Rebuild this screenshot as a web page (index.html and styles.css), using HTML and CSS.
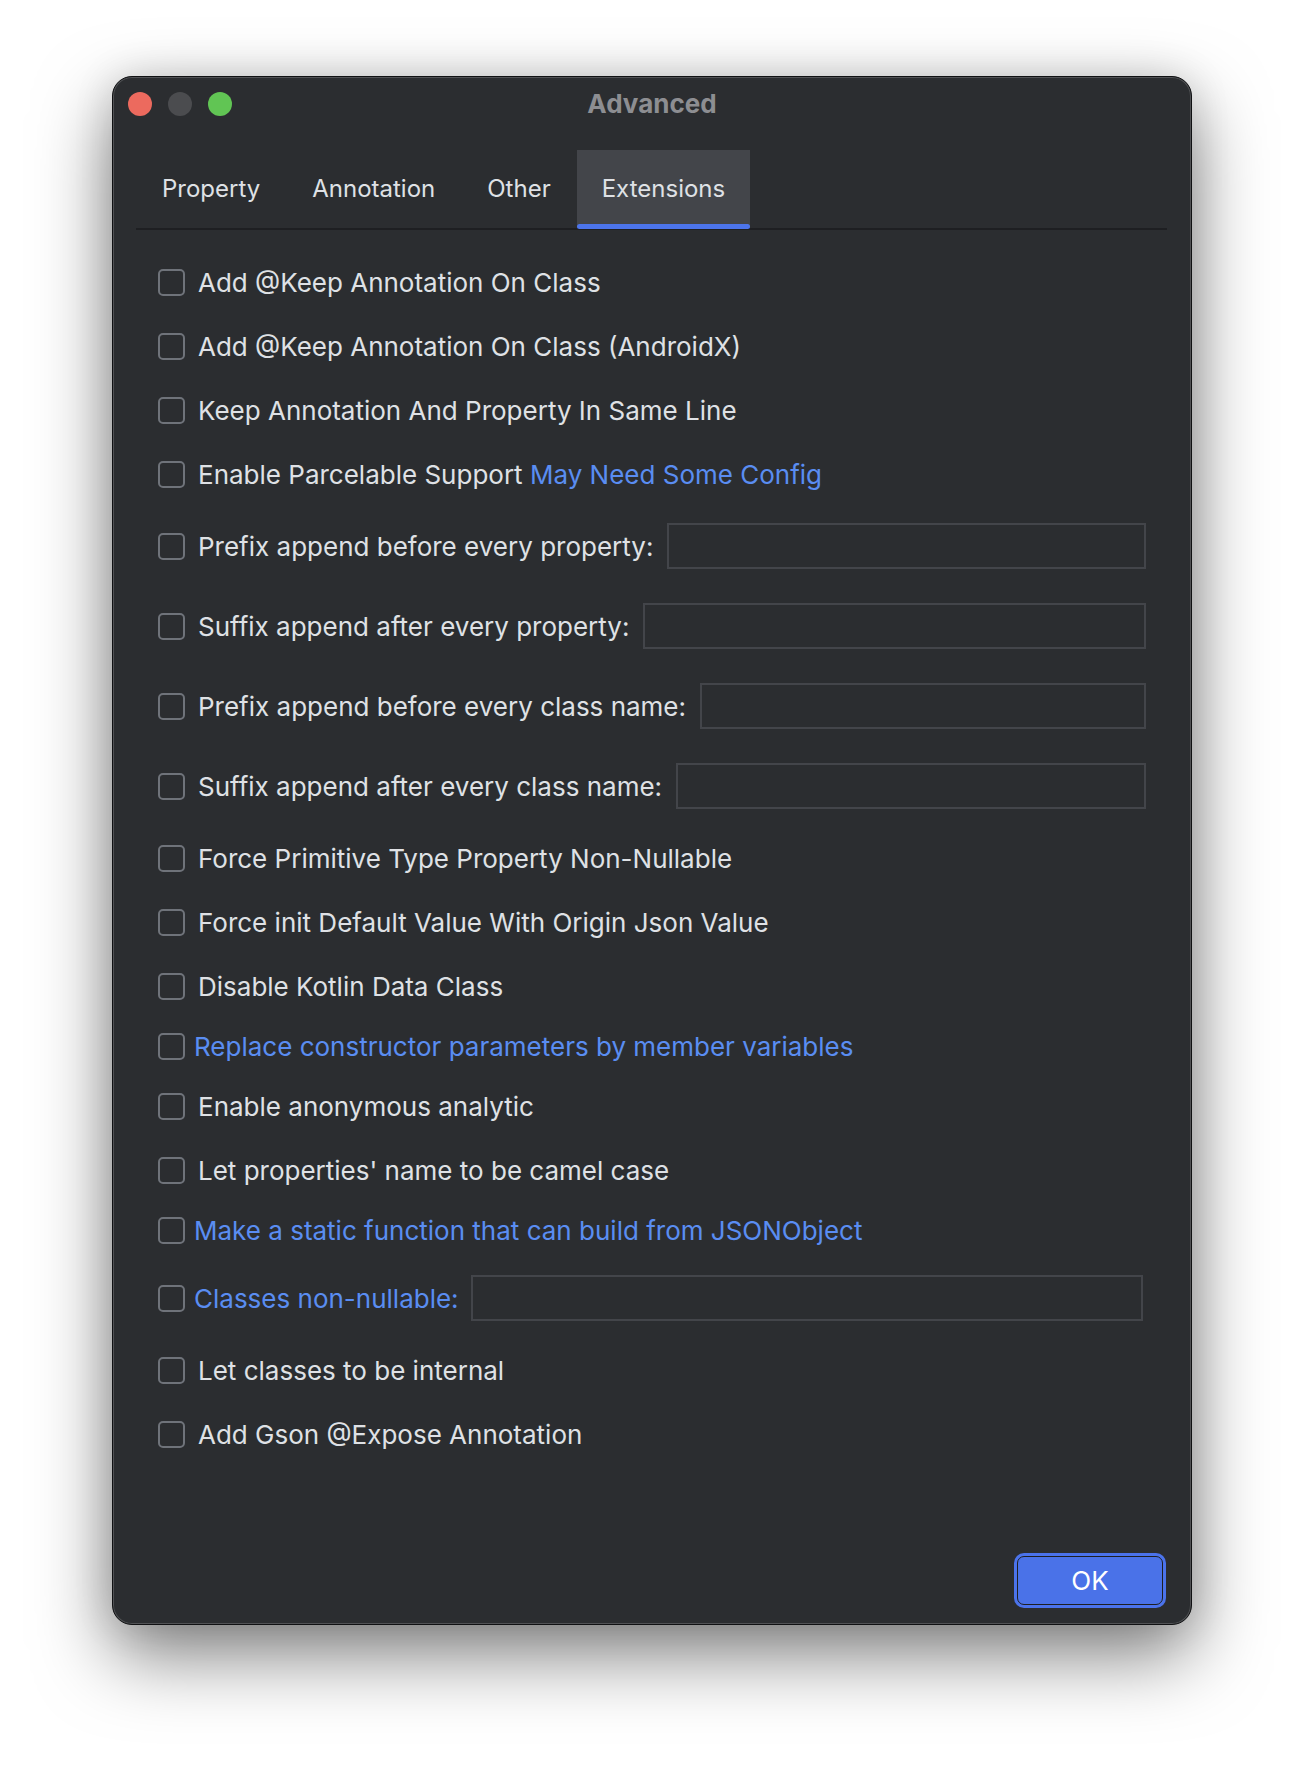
FILE: index.html
```html
<!DOCTYPE html>
<html lang="en">
<head>
<meta charset="utf-8">
<title>Advanced</title>
<link rel="stylesheet" href="styles.css">
</head>
<body>
<div class="window">
  <div class="titlebar">
    <div class="lights">
      <span class="light red"></span>
      <span class="light gray"></span>
      <span class="light green"></span>
    </div>
    <div class="title">Advanced</div>
    <div class="spacer"></div>
  </div>

  <div class="tabs">
    <div class="tab">Property</div>
    <div class="tab">Annotation</div>
    <div class="tab">Other</div>
    <div class="tab active">Extensions</div>
  </div>

  <div class="content">
    <div class="row"><span class="cb"></span><span class="label">Add @Keep Annotation On Class</span></div>
    <div class="row"><span class="cb"></span><span class="label">Add @Keep Annotation On Class (AndroidX)</span></div>
    <div class="row"><span class="cb"></span><span class="label">Keep Annotation And Property In Same Line</span></div>
    <div class="row"><span class="cb"></span><span class="label">Enable Parcelable Support <span class="link">May Need Some Config</span></span></div>
    <div class="row tall"><span class="cb"></span><span class="label">Prefix append before every property:</span><span class="field"></span></div>
    <div class="row tall"><span class="cb"></span><span class="label">Suffix append after every property:</span><span class="field"></span></div>
    <div class="row tall"><span class="cb"></span><span class="label">Prefix append before every class name:</span><span class="field"></span></div>
    <div class="row tall"><span class="cb"></span><span class="label">Suffix append after every class name:</span><span class="field"></span></div>
    <div class="row"><span class="cb"></span><span class="label">Force Primitive Type Property Non-Nullable</span></div>
    <div class="row"><span class="cb"></span><span class="label">Force init Default Value With Origin Json Value</span></div>
    <div class="row"><span class="cb"></span><span class="label">Disable Kotlin Data Class</span></div>
    <div class="row short"><span class="cb"></span><span class="label link">Replace constructor parameters by member variables</span></div>
    <div class="row"><span class="cb"></span><span class="label">Enable anonymous analytic</span></div>
    <div class="row"><span class="cb"></span><span class="label">Let properties' name to be camel case</span></div>
    <div class="row short"><span class="cb"></span><span class="label link">Make a static function that can build from JSONObject</span></div>
    <div class="row tall linkrow"><span class="cb"></span><span class="label link">Classes non-nullable:</span><span class="field narrow"></span></div>
    <div class="row"><span class="cb"></span><span class="label">Let classes to be internal</span></div>
    <div class="row"><span class="cb"></span><span class="label">Add Gson @Expose Annotation</span></div>
  </div>

  <div class="footer">
    <button class="ok" type="button">OK</button>
  </div>
</div>
</body>
</html>
```

FILE: styles.css
```css
* { box-sizing: border-box; }

html, body {
  margin: 0;
  padding: 0;
}

body {
  width: 1304px;
  height: 1774px;
  background: #ffffff;
  padding: 76px 112px 0 112px;
  font-family: "Inter", "Noto Sans", "Liberation Sans", sans-serif;
  color: #dfe1e5;
}

.window {
  width: 1080px;
  height: 1549px;
  background: #2b2d30;
  border: 1px solid #101113;
  border-radius: 20px;
  box-shadow:
    inset 0 0 0 1px rgba(255, 255, 255, 0.18),
    0 30px 75px rgba(0, 0, 0, 0.5),
    0 0 40px rgba(0, 0, 0, 0.12);
  display: flex;
  flex-direction: column;
}

.titlebar {
  height: 54px;
  display: grid;
  grid-template-columns: 1fr auto 1fr;
  align-items: center;
  padding: 0 15px;
}

.lights {
  display: flex;
  gap: 16px;
}

.light {
  width: 24px;
  height: 24px;
  border-radius: 50%;
  display: block;
}
.light.red { background: #ec6a5e; }
.light.gray { background: #4b4c4f; }
.light.green { background: #61c554; }

.title {
  font-weight: 700;
  font-size: 26px;
  color: #8d8e92;
  margin-top: -2px;
}

.tabs {
  margin: 19px 24px 0 23px;
  display: flex;
  border-bottom: 2px solid #1e1f22;
}

.tab {
  position: relative;
  height: 78px;
  padding: 0 26px 2px;
  display: flex;
  align-items: center;
  font-size: 24px;
  color: #dfe1e5;
}

.tab.active {
  background: #43454a;
  padding: 0 25px 2px;
}

.tab.active::after {
  content: "";
  position: absolute;
  left: 0;
  right: 0;
  bottom: -1px;
  height: 5px;
  border-radius: 3px;
  background: #4c74eb;
}

.content {
  padding: 20px 45px 0 45px;
  display: flex;
  flex-direction: column;
}

.row {
  height: 64px;
  display: flex;
  align-items: center;
  font-size: 26px;
}

.row.tall { height: 80px; }
.row.short { height: 56px; }

.cb {
  flex: none;
  width: 27px;
  height: 27px;
  border: 2px solid #6f737a;
  border-radius: 5px;
  margin-right: 13px;
}

.row.short .cb,
.row.linkrow .cb {
  margin-right: 9px;
}

.label {
  white-space: nowrap;
}

.link {
  color: #5a8df2;
}

.field {
  flex: 1;
  height: 46px;
  margin-left: 14px;
  border: 2px solid #43454a;
}

.field.narrow {
  margin-left: 12px;
  margin-right: 3px;
}

.footer {
  margin-top: auto;
  display: flex;
  justify-content: flex-end;
  padding: 0 28px 19px 0;
}

.ok {
  width: 146px;
  height: 49px;
  border: 1px solid #1e1f22;
  border-radius: 7px;
  background: #4a72e8;
  box-shadow: 0 0 0 3px #4b73eb;
  color: #ffffff;
  font-family: "Inter", "Noto Sans", "Liberation Sans", sans-serif;
  font-size: 26px;
  padding: 0;
}
```
